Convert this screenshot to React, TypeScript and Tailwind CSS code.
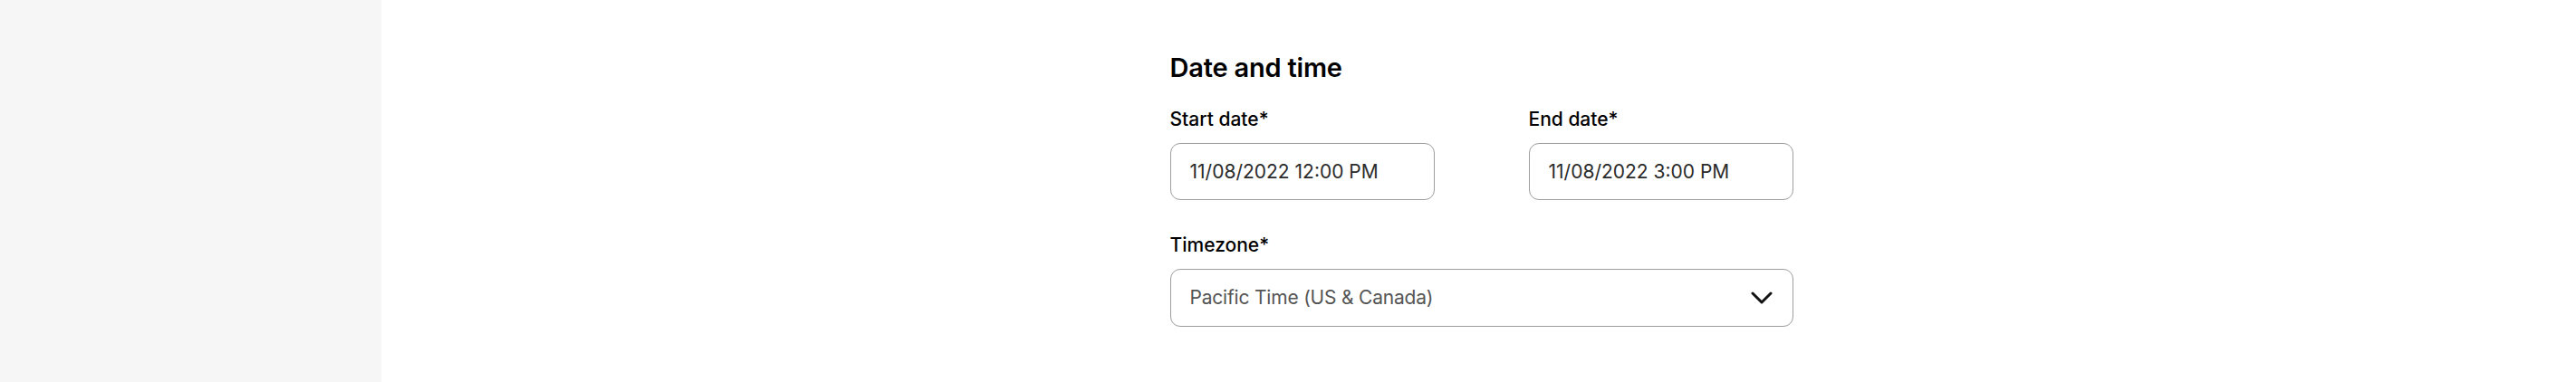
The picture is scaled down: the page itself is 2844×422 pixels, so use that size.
import { useState } from "react";

const font = { fontFamily: "Inter, 'Noto Sans', sans-serif" };

function Field({
  label,
  value,
}: {
  label: string;
  value: string;
}) {
  return (
    <div className="flex flex-col">
      <label className="text-[21px] leading-[28px] font-medium text-black">
        {label}
      </label>
      <input
        readOnly
        value={value}
        className="mt-[12px] h-[63px] w-[292px] rounded-[11px] border-[1.5px] border-[#9e9e9e] bg-white px-[21px] text-[21px] text-[#2b2b2b] outline-none"
      />
    </div>
  );
}

export default function App() {
  const [timezone] = useState("Pacific Time (US & Canada)");

  return (
    <div className="flex h-screen w-full bg-white" style={font}>
      <aside className="w-[421px] shrink-0 bg-[#f6f6f6]" />
      <main className="flex flex-1 justify-center">
        <div className="w-[688px] pt-[57px] pl-[3px]">
          <h2 className="text-[29px] leading-[36px] font-semibold tracking-[-0.2px] text-black">
            Date and time
          </h2>
          <div className="mt-[25px] flex gap-[104px]">
            <Field label="Start date*" value="11/08/2022 12:00 PM" />
            <Field label="End date*" value="11/08/2022 3:00 PM" />
          </div>
          <div className="mt-[36px] flex flex-col">
            <label className="text-[21px] leading-[28px] font-medium text-black">
              Timezone*
            </label>
            <button className="mt-[12px] flex h-[64px] w-[688px] items-center justify-between rounded-[11px] border-[1.5px] border-[#9e9e9e] bg-white pl-[21px] pr-[22px] text-left text-[21px] tracking-[-0.2px] text-[#555555]">
              <span>{timezone}</span>
              <svg width="24" height="14" viewBox="0 0 24 14" fill="none">
                <path
                  d="M2 2L12 12L22 2"
                  stroke="#111"
                  strokeWidth="3"
                  strokeLinecap="round"
                  strokeLinejoin="round"
                />
              </svg>
            </button>
          </div>
        </div>
      </main>
    </div>
  );
}
